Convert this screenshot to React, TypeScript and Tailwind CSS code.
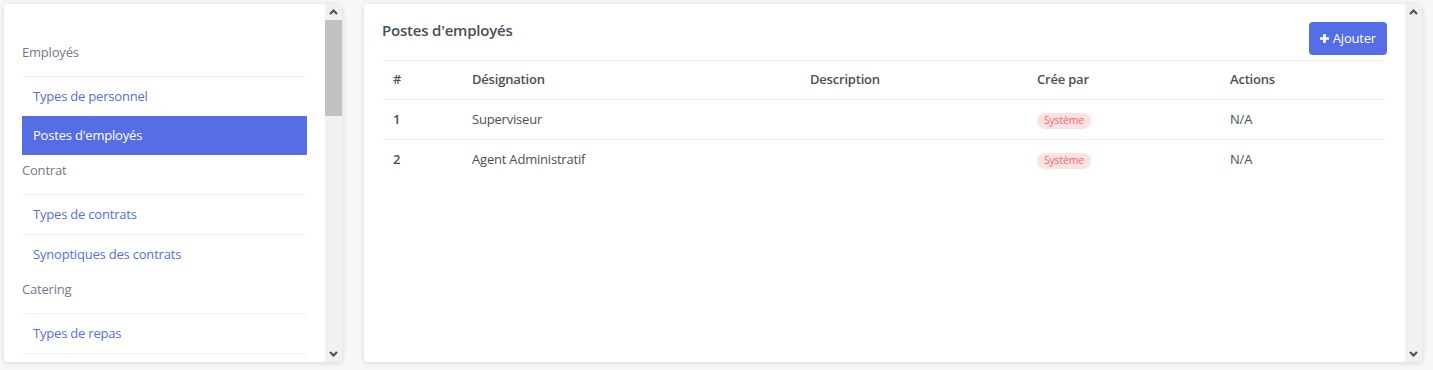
import { ReactNode } from "react";

const font = { fontFamily: '"Open Sans", "Liberation Sans", sans-serif' };

type Group = { title: string; items: string[] };

const groups: Group[] = [
  { title: "Employés", items: ["Types de personnel", "Postes d'employés"] },
  { title: "Contrat", items: ["Types de contrats", "Synoptiques des contrats"] },
  { title: "Catering", items: ["Types de repas"] },
];

const rows = [
  { id: 1, name: "Superviseur" },
  { id: 2, name: "Agent Administratif" },
];

function Chevron({ up }: { up?: boolean }) {
  return (
    <svg width="9" height="6" viewBox="0 0 9 6" className="block">
      <polyline
        points={up ? "1,5 4.5,1.5 8,5" : "1,1 4.5,4.5 8,1"}
        fill="none"
        stroke="#505050"
        strokeWidth="2"
      />
    </svg>
  );
}

function Scrollbar({ thumb }: { thumb?: boolean }) {
  return (
    <div className="flex w-[17px] shrink-0 flex-col bg-[#f1f1f1]">
      <div className="flex h-[16px] items-center justify-center">
        <Chevron up />
      </div>
      <div className="flex-1">{thumb && <div className="h-[96px] bg-[#c1c1c1]" />}</div>
      <div className="flex h-[16px] items-center justify-center">
        <Chevron />
      </div>
    </div>
  );
}

function Card({ children, className }: { children: ReactNode; className?: string }) {
  return (
    <div className={`flex h-[358px] overflow-hidden rounded-[3px] bg-white shadow-[0_1px_6px_rgba(0,0,0,0.14)] ${className ?? ""}`}>
      {children}
    </div>
  );
}

function SideMenu() {
  return (
    <Card className="w-[338px]">
      <div className="min-w-0 flex-1 overflow-hidden px-[18px] pt-[33px] tracking-[-0.2px]">
        {groups.map((g) => (
          <div key={g.title}>
            <div className="h-[39px] pt-[5px] text-[13px] leading-[21px] text-[#74788d]">{g.title}</div>
            {g.items.map((it) => {
              const active = it === "Postes d'employés";
              return (
                <div
                  key={it}
                  className={
                    active
                      ? "flex h-[39px] items-center bg-[#556ee6] pl-[11px] text-[13px] text-white"
                      : "flex h-[40px] items-center border-t border-[#eff2f7] pl-[11px] text-[13px] text-[#556ee6]"
                  }
                >
                  {it}
                </div>
              );
            })}
          </div>
        ))}
        <div className="border-t border-[#eff2f7]" />
      </div>
      <Scrollbar thumb />
    </Card>
  );
}

function Badge({ children }: { children: ReactNode }) {
  return (
    <span className="inline-flex h-[16px] items-center rounded-full bg-[#fde2e2] px-[7px] text-[10.5px] font-medium text-[#f46a6a]">
      {children}
    </span>
  );
}

function PostsTable() {
  const cols = ["w-[79px]", "w-[338px]", "w-[227px]", "w-[193px]", "flex-1"];
  return (
    <Card className="flex-1">
      <div className="min-w-0 flex-1 px-[18px] pt-[18px] tracking-[-0.2px]">
        <div className="flex items-start justify-between">
          <h4 className="-mt-[3px] text-[15px] leading-[22px] font-semibold text-[#495057]">Postes d'employés</h4>
          <button className="flex h-[33px] items-center gap-[3px] rounded-[4px] bg-[#556ee6] pr-[11px] pl-[10px] text-[13px] text-white">
            <svg width="11" height="11" viewBox="0 0 11 11">
              <path d="M5.5 1v9M1 5.5h9" stroke="white" strokeWidth="2.6" />
            </svg>
            Ajouter
          </button>
        </div>
        <div className="mt-[5px] text-[13px] text-[#495057]">
          <div className="flex h-[40px] items-center border-y border-[#eff2f7] font-semibold">
            {["#", "Désignation", "Description", "Crée par", "Actions"].map((h, i) => (
              <div key={h} className={`${cols[i]} pl-[11px]`}>
                {h}
              </div>
            ))}
          </div>
          {rows.map((r, ri) => (
            <div
              key={r.id}
              className={`flex h-[40px] items-center ${ri < rows.length - 1 ? "border-b border-[#eff2f7]" : ""}`}
            >
              <div className={`${cols[0]} pl-[11px] font-semibold`}>{r.id}</div>
              <div className={`${cols[1]} pl-[11px]`}>{r.name}</div>
              <div className={`${cols[2]} pl-[11px]`} />
              <div className={`${cols[3]} pl-[11px]`}>
                <Badge>Système</Badge>
              </div>
              <div className={`${cols[4]} pl-[11px]`}>N/A</div>
            </div>
          ))}
        </div>
      </div>
      <Scrollbar />
    </Card>
  );
}

export default function App() {
  return (
    <div style={font} className="flex h-[370px] w-[1433px] gap-[22px] bg-[#f8f8fb] pt-[4px] pr-[11px] pl-[4px]">
      <SideMenu />
      <PostsTable />
    </div>
  );
}
